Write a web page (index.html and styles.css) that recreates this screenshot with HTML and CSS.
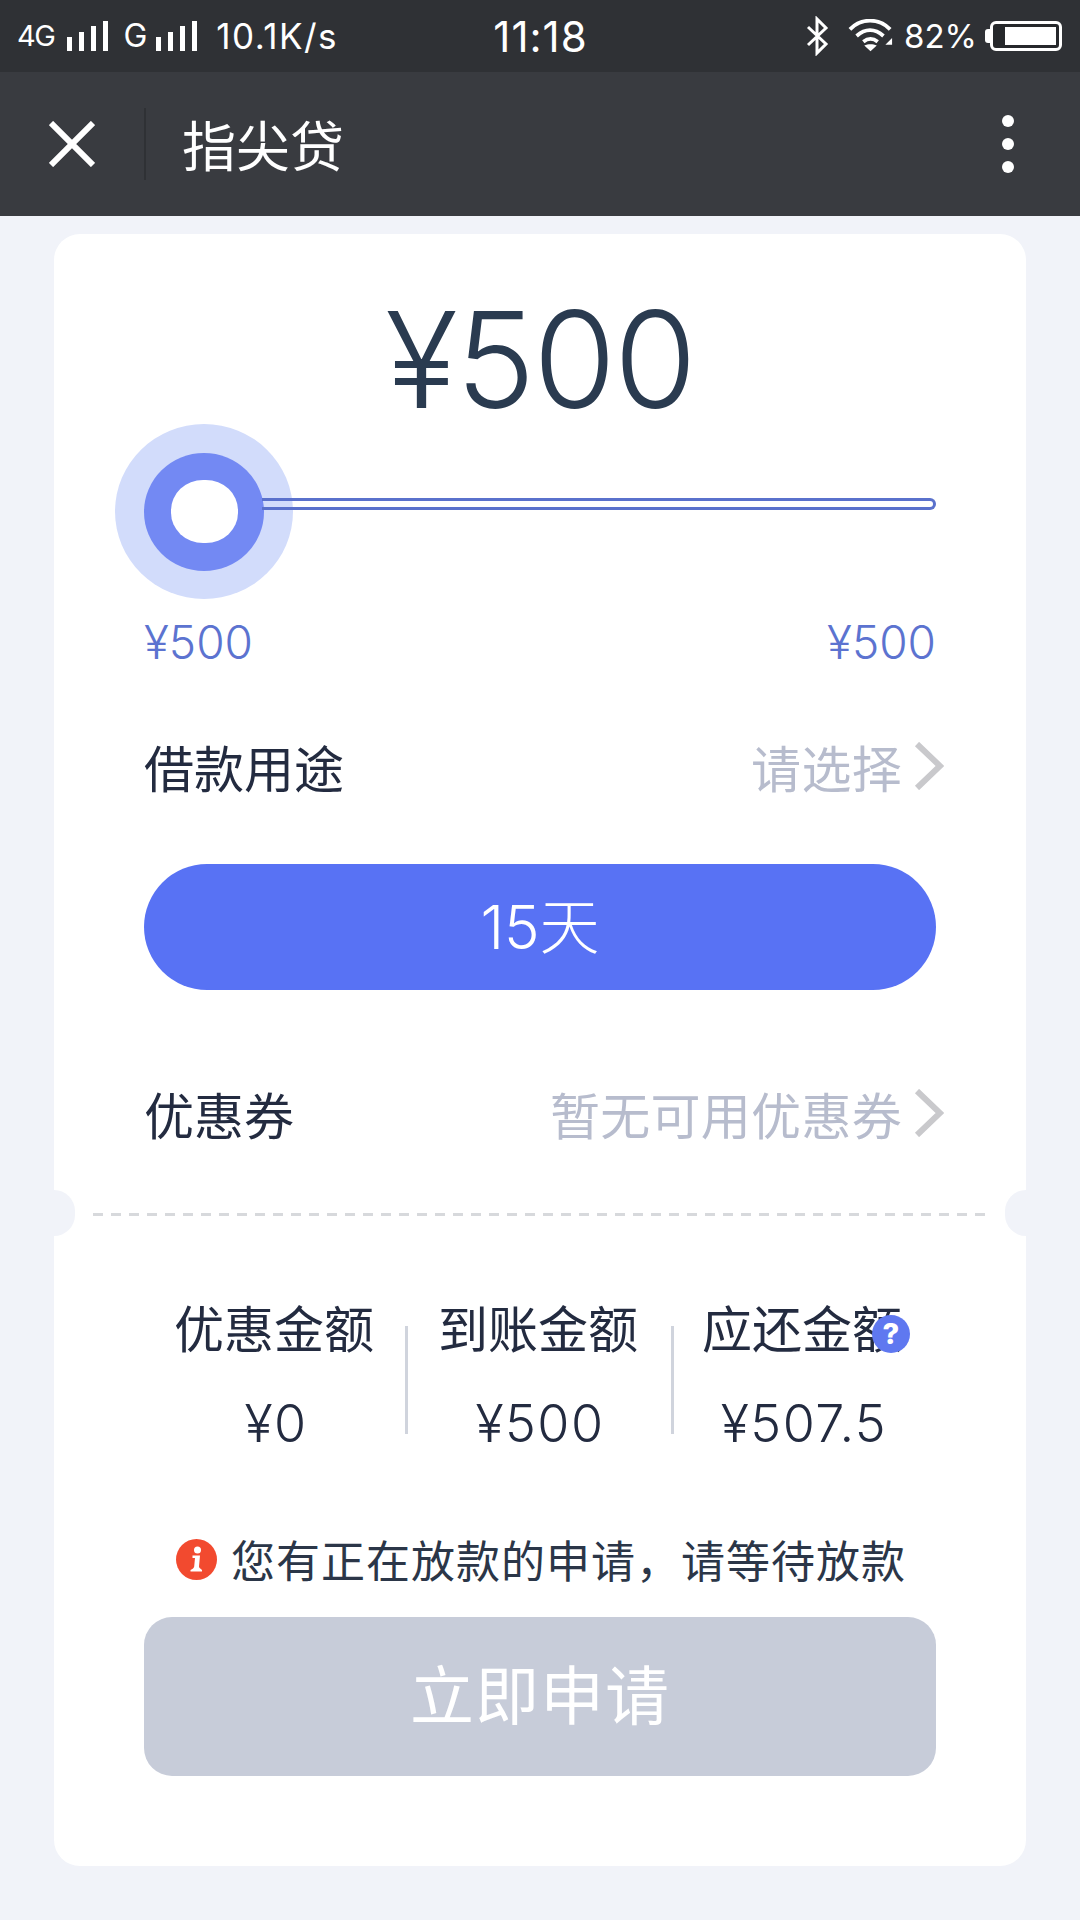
FILE: index.html
```html
<!DOCTYPE html>
<html lang="zh">
<head>
<meta charset="utf-8">
<title>指尖贷</title>
<link rel="stylesheet" href="styles.css">
</head>
<body>
<div class="phone">
  <div class="status">
    <div class="status-left">
      <span class="st st-4g">4G</span>
      <svg class="bars" width="42" height="30" viewBox="0 0 42 30"><path d="M0 16h5v14H0zM12 11h5v19h-5zM24 5h5v25h-5zM36 0h5v30h-5z" fill="#fff"/></svg>
      <span class="st st-g">G</span>
      <svg class="bars" width="42" height="30" viewBox="0 0 42 30"><path d="M0 16h5v14H0zM12 11h5v19h-5zM24 5h5v25h-5zM36 0h5v30h-5z" fill="#fff"/></svg>
      <span class="st st-speed">10.1K/s</span>
    </div>
    <div class="status-time">11:18</div>
    <div class="status-right">
      <svg class="bt" width="24" height="40" viewBox="0 0 24 40"><path d="M3 11l18 17-9 9V3l9 9L3 29" fill="none" stroke="#fff" stroke-width="3"/></svg>
      <svg class="wifi" width="46" height="34" viewBox="0 0 48 34"><path d="M2 10C14-2 32-2 44 10M9 17c9-8 19-8 28 0M16 23c5-4 10-4 15 0" fill="none" stroke="#fff" stroke-width="4"/><path d="M17 27c4-2 9-2 13 0l-6.500 6zM39 26l7-7v7z" fill="#fff"/></svg>
      <span class="st st-batt">82%</span>
      <div class="battery"><div class="battery-fill"></div></div>
    </div>
  </div>
  <header class="nav">
    <svg class="close" width="46" height="46" viewBox="0 0 46 46"><path d="M2 2l42 42M44 2L2 44" stroke="#fff" stroke-width="6" fill="none"/></svg>
    <span class="nav-sep"></span>
    <span class="nav-title">指尖贷</span>
    <span class="more"><i></i><i></i><i></i></span>
  </header>
  <main class="card">
    <section class="top">
      <div class="amount">¥500</div>
      <div class="slider">
        <div class="halo"><div class="thumb"><div class="hole"></div></div></div>
        <div class="track"></div>
      </div>
      <div class="range"><span>¥500</span><span>¥500</span></div>
      <div class="row row-use">
        <span class="row-label">借款用途</span>
        <span class="row-value">请选择<svg class="chev" width="30" height="48" viewBox="0 0 30 48"><path d="M3 2l23 22L3 46" fill="none" stroke="#c9c9cc" stroke-width="6"/></svg></span>
      </div>
      <div class="pill">15天</div>
      <div class="row row-coupon">
        <span class="row-label">优惠券</span>
        <span class="row-value">暂无可用优惠券<svg class="chev" width="30" height="48" viewBox="0 0 30 48"><path d="M3 2l23 22L3 46" fill="none" stroke="#c9c9cc" stroke-width="6"/></svg></span>
      </div>
    </section>
    <div class="tear"><span class="notch notch-l"></span><span class="dash"></span><span class="notch notch-r"></span></div>
    <section class="bottom">
      <div class="stats">
        <div class="stat"><div class="stat-label">优惠金额</div><div class="stat-value">¥0</div></div>
        <div class="stat stat-mid"><div class="stat-label">到账金额</div><div class="stat-value">¥500</div></div>
        <div class="stat"><div class="stat-label">应还金额<span class="help">?</span></div><div class="stat-value">¥507.5</div></div>
      </div>
      <div class="notice">
        <svg class="notice-icon" width="41" height="41" viewBox="0 0 41 41"><circle cx="20.500" cy="20.500" r="20.500" fill="#f24a2f"/><circle cx="21.500" cy="11" r="3.500" fill="#fff"/><path d="M16.500 16.500h7.500l-1 11c0 1.500 1.500 2 3 3.500v1.500H14.500V31c2-1 3.500-2 3.700-3.500l.8-8.500h-2.500z" fill="#fff"/></svg>
        <span>您有正在放款的申请，请等待放款</span>
      </div>
      <button class="apply">立即申请</button>
    </section>
  </main>
</div>
</body>
</html>
```
FILE: styles.css
```css
* { box-sizing: border-box; }
html, body { margin: 0; padding: 0; }
body { width: 1080px; height: 1920px; overflow: hidden; background: #f1f3f9; font-family: "Noto Sans CJK SC", Inter, sans-serif; }
.phone { width: 1080px; height: 1920px; display: flex; flex-direction: column; }

.status { height: 72px; flex: none; background: #2f3135; color: #fff; display: grid; grid-template-columns: 1fr auto 1fr; align-items: center; padding: 0 16px 0 17px; }
.status-left, .status-right { display: flex; align-items: center; }
.status-right { justify-content: flex-end; }
.st { font-family: Inter, sans-serif; font-size: 32px; line-height: 40px; }
.st-4g { font-size: 29px; letter-spacing: -1.500px; }
.st-g { font-size: 32px; margin: 0 9px 0 14px; }
.st-speed { margin-left: 18px; font-size: 35px; letter-spacing: 1.500px; }
.bars { margin-left: 13px; }
.st-g + .bars { margin-left: 0; }
.status-time { font-family: Inter, sans-serif; font-size: 42px; letter-spacing: 1px; }
.bt { margin-right: 19px; }
.wifi { margin-right: 10px; }
.st-batt { font-size: 33px; }
.battery { width: 72px; height: 30px; margin-left: 13px; margin-right: 2px; border: 3px solid #fff; border-radius: 6px; padding: 3px 3px 3px 12px; position: relative; background: #26282b; }
.battery::before { content: ""; position: absolute; left: -8px; top: 5px; width: 5px; height: 14px; background: #fff; border-radius: 3px 0 0 3px; }
.battery-fill { height: 100%; background: #fff; }

.nav { height: 144px; flex: none; background: #393b40; display: flex; align-items: center; padding: 0 66px 0 49px; }
.close { flex: none; }
.nav-sep { width: 2px; height: 72px; background: #2f3135; margin-left: 49px; }
.nav-title { color: #fff; font-size: 54px; margin-left: 36px; flex: 1; line-height: 1; }
.more { display: flex; flex-direction: column; gap: 11px; }
.more i { width: 12px; height: 12px; border-radius: 50%; background: #fff; display: block; }

.card { width: 972px; height: 1632px; margin: 18px 0 0 54px; background: #fff; border-radius: 26px; display: flex; flex-direction: column; }
.top { padding: 0 90px; height: 956px; flex: none; }
.amount { text-align: center; font-family: Inter, sans-serif; font-weight: 300; font-size: 134px; line-height: 130px; color: #2a3b50; padding-top: 60px; height: 190px; letter-spacing: -2px; }
.slider { height: 178px; position: relative; }
.track { position: absolute; left: 118px; right: 0; top: 74px; height: 12px; border: 3px solid #5a71cc; border-radius: 0 6px 6px 0; border-left: 0; }
.halo { position: absolute; left: -29px; top: 0; width: 178px; height: 175px; border-radius: 50%; background: #d2dcfb; display: flex; align-items: center; justify-content: center; }
.thumb { width: 120px; height: 118px; border-radius: 50%; background: #7389f3; display: flex; align-items: center; justify-content: center; }
.hole { width: 67px; height: 63px; border-radius: 48%; background: #fff; }
.range { display: flex; justify-content: space-between; font-family: Inter, sans-serif; font-size: 46px; line-height: 52px; color: #5c73d0; margin-top: 14px; font-weight: 300; }
.row { display: flex; justify-content: space-between; align-items: center; height: 60px; margin-right: -8px; }
.row-use { margin-top: 68px; }
.row-coupon { margin-top: 93px; }
.row-label { font-size: 50px; color: #232b40; line-height: 60px; font-weight: 400; }
.row-value { display: flex; align-items: center; font-size: 50px; color: #b7bccd; font-weight: 400; line-height: 60px; letter-spacing: 0.300px; }
.chev { margin-left: 12px; }
.pill { height: 126px; margin-top: 68px; padding-bottom: 9px; border-radius: 63px; background: #5872f4; color: #fff; display: flex; align-items: center; justify-content: center; font-size: 60px; font-weight: 300; font-family: Inter, "Noto Sans CJK SC", sans-serif; }

.tear { height: 48px; position: relative; display: flex; align-items: center; flex: none; }
.dash { flex: 1; margin: 0 39px; height: 3px; background: repeating-linear-gradient(to right, #d7d9dc 0 10px, transparent 10px 18px); }
.notch { position: absolute; top: 0; width: 21px; height: 46px; background: #f1f3f9; }
.notch-l { left: 0; border-radius: 0 23px 23px 0; }
.notch-r { right: 0; border-radius: 23px 0 0 23px; }

.bottom { padding: 0 90px; flex: 1; display: flex; flex-direction: column; }
.stats { display: grid; grid-template-columns: 1fr 1fr 1fr; margin-top: 58px; height: 140px; }
.stat { text-align: center; position: relative; }
.stat-mid::before, .stat-mid::after { content: ""; position: absolute; top: 30px; height: 108px; width: 3px; background: #d0d4dd; }
.stat-mid::before { left: -3px; }
.stat-mid::after { right: -2px; }
.stat-label { font-size: 50px; color: #232b40; line-height: 60px; font-weight: 400; position: relative; left: -2px; }
.stat-value { font-family: Inter, "Noto Sans CJK SC", sans-serif; font-size: 52px; color: #232b40; line-height: 60px; margin-top: 38px; font-weight: 300; letter-spacing: 1.500px; }
.help { position: absolute; left: 202px; top: 19px; width: 38px; height: 38px; border-radius: 50%; background: #5f78f0; color: #fff; font-family: Inter, sans-serif; font-size: 29px; font-weight: 800; line-height: 38px; text-align: center; }
.notice { display: flex; align-items: center; justify-content: center; margin-top: 95px; height: 56px; padding-left: 2px; font-size: 44px; color: #2b3648; font-weight: 400; letter-spacing: 1px; }
.notice-icon { margin-right: 14px; flex: none; }
.apply { height: 159px; margin-top: 30px; padding: 0 0 12px; width: 100%; border: 0; border-radius: 28px; background: #c7ccd9; color: #fff; font-family: inherit; font-size: 64px; font-weight: 400; letter-spacing: 1px; }
```
